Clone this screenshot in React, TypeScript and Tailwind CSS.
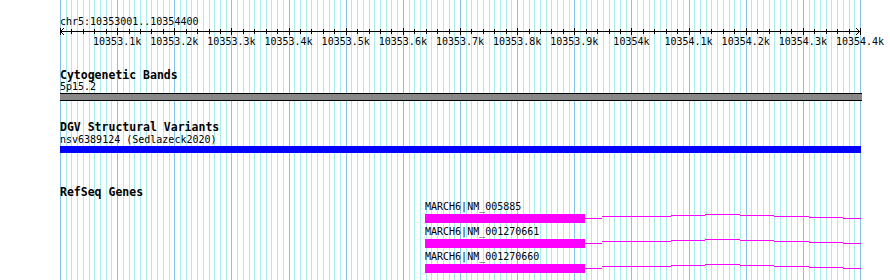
const START = 10353000
const END = 10354400
const LEFT = 60
const WIDTH = 800

const toX = (bp: number) => LEFT + ((bp - START) / (END - START)) * WIDTH

function GridLines() {
  const lines = []
  for (let i = 0; i <= 140; i++) {
    const x = Math.round(toX(START + i * 10)) + 0.5
    const major = i % 10 === 0
    lines.push(
      <line key={i} x1={x} x2={x} y1={0} y2={280} stroke={major ? "#86c3ea" : "#a9ecec"} strokeWidth={1} />
    )
  }
  return (
    <svg className="absolute inset-0" width={890} height={280} shapeRendering="crispEdges">
      {lines}
    </svg>
  )
}

function Ruler() {
  const ticks = []
  for (let bp = START; bp <= END; bp += 20) {
    const x = Math.round(toX(bp)) + 0.5
    const major = (bp - START) % 100 === 0
    ticks.push(<line key={bp} x1={x} x2={x} y1={major ? 1 : 2} y2={major ? 8 : 7} stroke="#000" />)
  }
  const labels = []
  for (let bp = START + 100; bp <= END; bp += 100) {
    const k = bp / 1000
    const text = Number.isInteger(k) ? `${k}k` : `${k.toFixed(1)}k`
    labels.push(
      <span key={bp} className="absolute top-0 -translate-x-1/2 whitespace-nowrap" style={{ left: toX(bp) }}>
        {text}
      </span>
    )
  }
  return (
    <>
      <svg width={890} height={8} className="block" shapeRendering="crispEdges">
        {ticks}
        <line x1={60} x2={861} y1={4.5} y2={4.5} stroke="#000" />
        <polyline points="64,1 60.5,4.5 64,8" fill="none" stroke="#000" />
        <polyline points="856,1 859.5,4.5 856,8" fill="none" stroke="#000" />
      </svg>
      <div className="relative mt-[1px] h-[12px] leading-[12px]">{labels}</div>
    </>
  )
}

function Intron() {
  const segs = [
    [0, 17, 4],
    [17, 51, 2],
    [51, 86, 2],
    [86, 120, 1],
    [120, 155, 0],
    [155, 189, 1],
    [189, 224, 2],
    [224, 258, 3],
    [258, 276, 4],
  ]
  return (
    <svg width={276} height={9} className="block" shapeRendering="crispEdges">
      {segs.map(([a, b, y]) => (
        <rect key={a} x={a} y={y} width={b - a} height={1} fill="#ff00ff" />
      ))}
    </svg>
  )
}

function Gene({ name }: { name: string }) {
  return (
    <div className="mt-[3px]">
      <div className="ml-[365px] h-[12px] text-[10px] leading-[12px]">{name}</div>
      <div className="mt-[1px] ml-[365px] flex">
        <div className="h-[9px] w-[160px] bg-[#ff00ff]" />
        <Intron />
      </div>
    </div>
  )
}

export default function App() {
  return (
    <div className="relative h-[280px] w-[890px] overflow-hidden bg-white font-['DejaVu_Sans_Mono',monospace] text-[10px] text-black">
      <GridLines />

      <div className="relative pt-[16px]">
        <div className="h-[11px] pl-[60px] leading-[12px]">chr5:10353001..10354400</div>
        <Ruler />

        <div className="pl-[60px]">
          {/* Cytogenetic Bands */}
          <div className="mt-[21px] h-[12px] text-[11.5px] font-bold leading-[12px]">Cytogenetic Bands</div>
          <div className="h-[12px] leading-[12px]">5p15.2</div>
          <div className="h-[8px] w-[802px] border-y border-black bg-[#888888]" />

          {/* DGV */}
          <div className="mt-[20px] h-[12px] text-[11.5px] font-bold leading-[12px]">DGV Structural Variants</div>
          <div className="mt-[1px] h-[12px] leading-[12px]">nsv6389124 (Sedlazeck2020)</div>
          <div className="h-[7px] w-[801px] bg-[#0000ff]" />

          {/* RefSeq */}
          <div className="mt-[33px] h-[12px] text-[11.5px] font-bold leading-[12px]">RefSeq Genes</div>
          <Gene name="MARCH6|NM_005885" />
          <Gene name="MARCH6|NM_001270661" />
          <Gene name="MARCH6|NM_001270660" />
        </div>
      </div>
    </div>
  )
}
